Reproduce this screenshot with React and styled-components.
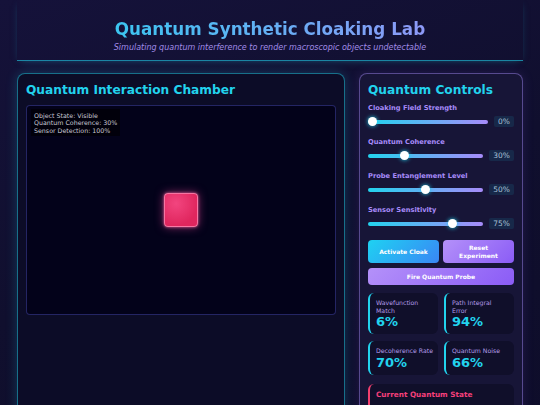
import React from "react";
import styled, { createGlobalStyle } from "styled-components";

const GlobalStyle = createGlobalStyle`
  body {
    margin: 0;
    background: linear-gradient(160deg, #15123a 0%, #100f2e 50%, #0e0d2a 100%);
    font-family: "DejaVu Sans", Verdana, sans-serif;
    color: #e2e8f0;
  }
`;

const Page = styled.div`
  padding: 0 17px;
`;

const Header = styled.header`
  text-align: center;
  padding: 18px 0 7px;
  border-bottom: 1px solid rgba(34, 211, 238, 0.6);
  box-shadow: 0 2px 8px -4px rgba(34, 211, 238, 0.5);
`;

const Title = styled.h1`
  margin: 0;
  font-size: 16.8px;
  line-height: 22px;
  font-weight: 700;
  background: linear-gradient(90deg, #22d3ee, #a78bfa);
  -webkit-background-clip: text;
  background-clip: text;
  color: transparent;
`;

const Subtitle = styled.p`
  margin: 2px 0 0;
  font-size: 8px;
  line-height: 11px;
  font-style: italic;
  color: #a28ce8;
`;

const Main = styled.main`
  display: grid;
  grid-template-columns: minmax(0, 2fr) minmax(0, 1fr);
  gap: 14px;
  margin-top: 12px;
`;

const Panel = styled.section`
  border-radius: 8px;
  padding: 8px;
  border: 1px solid ${(p) => (p.$purple ? "rgba(167,139,250,0.45)" : "rgba(34,211,238,0.5)")};
  background: ${(p) => (p.$purple ? "#171537" : "#0c0c27")};
  box-shadow: 0 0 12px ${(p) => (p.$purple ? "rgba(139,92,246,0.15)" : "rgba(34,211,238,0.22)")};
`;

const PanelTitle = styled.h2`
  margin: 0 0 ${(p) => p.$gap}px;
  font-size: 12.2px;
  line-height: 17px;
  font-weight: 700;
  color: #22d3ee;
  white-space: nowrap;
`;

const Chamber = styled.div`
  position: relative;
  height: 210px;
  box-sizing: border-box;
  border: 1px solid rgba(99, 102, 241, 0.35);
  border-radius: 4px;
  background: #03021a;
  display: flex;
  align-items: center;
  justify-content: center;
`;

const Readout = styled.div`
  position: absolute;
  top: 3px;
  left: 4px;
  padding: 3px 3px 2px;
  background: rgba(0, 0, 0, 0.55);
  font-size: 6.3px;
  line-height: 7.3px;
  color: #c9c9d6;
`;

const QuantumObject = styled.div`
  width: 34px;
  height: 34px;
  box-sizing: border-box;
  border-radius: 4px;
  border: 1px solid rgba(255, 150, 190, 0.7);
  background: radial-gradient(circle at 35% 30%, #f2457f, #e0265e 70%);
  box-shadow: 0 0 10px rgba(236, 72, 153, 0.6), 0 0 3px rgba(255, 120, 170, 0.8);
`;

const ControlGroup = styled.div`
  margin-bottom: 11px;
`;

const Label = styled.label`
  display: block;
  font-size: 6.7px;
  line-height: 9px;
  font-weight: 700;
  color: #a78bfa;
  margin-bottom: 3px;
`;

const SliderRow = styled.div`
  display: flex;
  align-items: center;
  gap: 6px;
`;

const Range = styled.input`
  flex: 1;
  min-width: 0;
  width: 0;
  margin: 0;
  height: 9px;
  appearance: none;
  -webkit-appearance: none;
  background: transparent;

  &::-webkit-slider-runnable-track {
    height: 4px;
    border-radius: 2px;
    background: linear-gradient(90deg, #22d3ee, #a78bfa);
  }
  &::-webkit-slider-thumb {
    -webkit-appearance: none;
    width: 9px;
    height: 9px;
    margin-top: -2.5px;
    border-radius: 50%;
    background: #fff;
    box-shadow: 0 0 4px #22d3ee;
  }
`;

const Badge = styled.span`
  padding: 0 4px;
  height: 11px;
  line-height: 11px;
  font-size: 7.5px;
  border-radius: 2px;
  color: #a9c1d9;
  background: rgba(34, 211, 238, 0.1);
`;

const ButtonRow = styled.div`
  display: grid;
  grid-template-columns: 1fr 1fr;
  gap: 4px;
`;

const Button = styled.button`
  border: none;
  border-radius: 4px;
  height: ${(p) => (p.$small ? 17 : 23)}px;
  width: 100%;
  margin-top: ${(p) => (p.$small ? 5 : 0)}px;
  padding: 0 8px;
  font-family: inherit;
  font-size: 6px;
  line-height: 7.5px;
  font-weight: 700;
  color: #fff;
  background: ${(p) =>
    p.$cyan
      ? "linear-gradient(135deg, #1ed2f2, #3a86f5)"
      : "linear-gradient(135deg, #b491f9, #8b5cf6)"};
`;

const Stats = styled.div`
  display: grid;
  grid-template-columns: 1fr 1fr;
  gap: 7px 6px;
  margin-top: 8px;
`;

const Card = styled.div`
  border-radius: 6px;
  border-left: 2px solid ${(p) => (p.$pink ? "#f43f6e" : "#22d3ee")};
  background: #100f2a;
  padding: 6px 2px 5px 6px;
  ${(p) => p.$pink && "margin-top: 9px;"}
`;

const CardLabel = styled.div`
  font-size: 6.2px;
  line-height: 7.5px;
  color: #b39ce8;
  white-space: pre-line;
`;

const CardValue = styled.div`
  font-size: 13px;
  line-height: 15px;
  font-weight: 700;
  color: #22d3ee;
`;

const StateTitle = styled.div`
  font-size: 7.3px;
  line-height: 9px;
  font-weight: 700;
  color: #f43f7a;
`;

const StateText = styled.div`
  margin-top: 8px;
  font-size: 6.5px;
  line-height: 8px;
  color: #c9c9d6;
`;

const controls = [
  { label: "Cloaking Field Strength", value: 0 },
  { label: "Quantum Coherence", value: 30 },
  { label: "Probe Entanglement Level", value: 50 },
  { label: "Sensor Sensitivity", value: 75 },
];

const stats = [
  { label: "Wavefunction\nMatch", value: "6%" },
  { label: "Path Integral\nError", value: "94%" },
  { label: "Decoherence Rate", value: "70%" },
  { label: "Quantum Noise", value: "66%" },
];

export default function App() {
  return (
    <>
      <GlobalStyle />
      <Page>
        <Header>
          <Title>Quantum Synthetic Cloaking Lab</Title>
          <Subtitle>
            Simulating quantum interference to render macroscopic objects undetectable
          </Subtitle>
        </Header>
        <Main>
          <Panel>
            <PanelTitle $gap={6}>Quantum Interaction Chamber</PanelTitle>
            <Chamber>
              <Readout>
                Object State: Visible
                <br />
                Quantum Coherence: 30%
                <br />
                Sensor Detection: 100%
              </Readout>
              <QuantumObject />
            </Chamber>
          </Panel>
          <Panel $purple>
            <PanelTitle $gap={5}>Quantum Controls</PanelTitle>
            {controls.map((c) => (
              <ControlGroup key={c.label}>
                <Label>{c.label}</Label>
                <SliderRow>
                  <Range type="range" min="0" max="100" defaultValue={c.value} />
                  <Badge>{c.value}%</Badge>
                </SliderRow>
              </ControlGroup>
            ))}
            <ButtonRow>
              <Button $cyan>Activate Cloak</Button>
              <Button>Reset Experiment</Button>
            </ButtonRow>
            <Button $small>Fire Quantum Probe</Button>
            <Stats>
              {stats.map((s) => (
                <Card key={s.label}>
                  <CardLabel>{s.label}</CardLabel>
                  <CardValue>{s.value}</CardValue>
                </Card>
              ))}
            </Stats>
            <Card $pink>
              <StateTitle>Current Quantum State</StateTitle>
              <StateText>
                Macroscopic object fully observable. Wavefunction collapsed under
                measurement.
              </StateText>
            </Card>
          </Panel>
        </Main>
      </Page>
    </>
  );
}
